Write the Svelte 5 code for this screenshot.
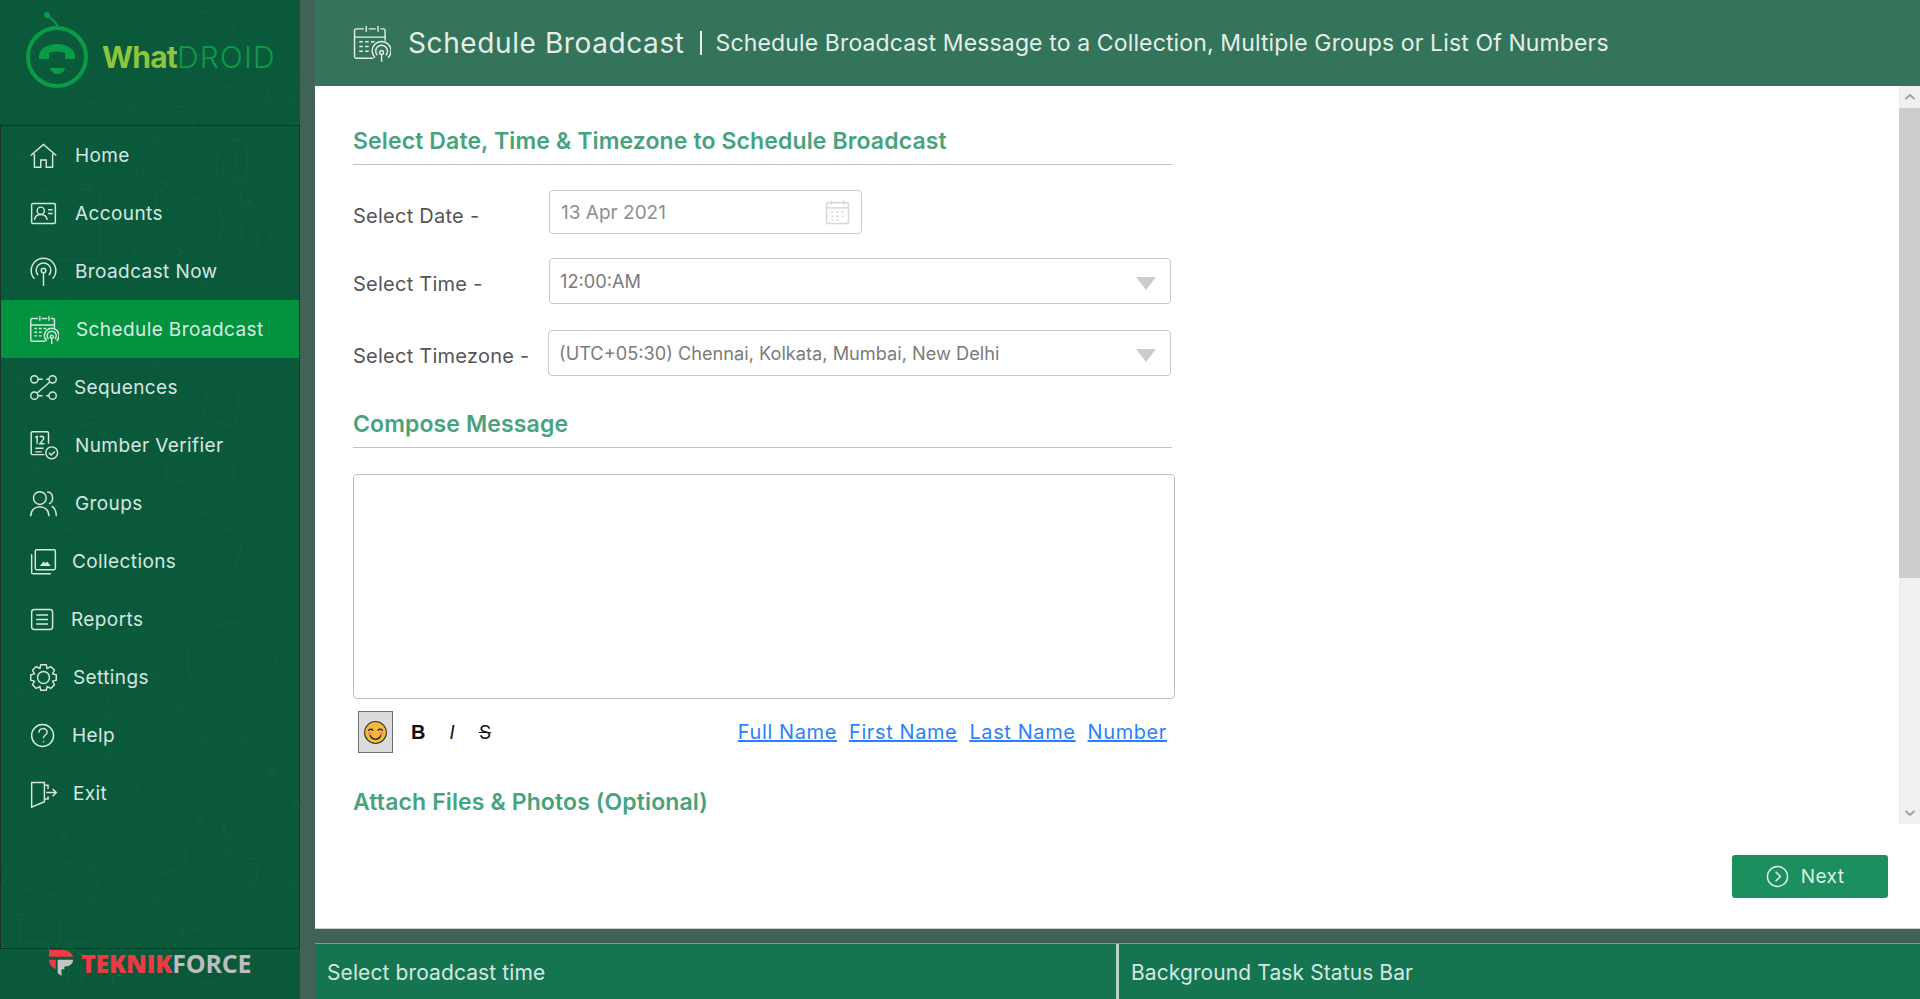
<script lang="ts">
	const navItems = [
		{ id: 'home', label: 'Home', gap: 16 },
		{ id: 'accounts', label: 'Accounts', gap: 16 },
		{ id: 'broadcast', label: 'Broadcast Now', gap: 16 },
		{ id: 'schedule', label: 'Schedule Broadcast', gap: 17, active: true },
		{ id: 'sequences', label: 'Sequences', gap: 15 },
		{ id: 'verifier', label: 'Number Verifier', gap: 16 },
		{ id: 'groups', label: 'Groups', gap: 16 },
		{ id: 'collections', label: 'Collections', gap: 13 },
		{ id: 'reports', label: 'Reports', gap: 12 },
		{ id: 'settings', label: 'Settings', gap: 14 },
		{ id: 'help', label: 'Help', gap: 13 },
		{ id: 'exit', label: 'Exit', gap: 14 }
	];

	const tokens = ['Full Name', 'First Name', 'Last Name', 'Number'];
	const timezone = '(UTC+05:30) Chennai, Kolkata, Mumbai, New Delhi';

	// small bubbles scattered through the wallpaper
	const bubbles = Array.from({ length: 70 }, (_, i) => ({
		x: (i * 137) % 297,
		y: (i * 211 + 40) % 990,
		r: 3 + (i * 7) % 7
	}));
</script>

{#snippet scheduleIcon()}
	<path d="M11 5H4.500a1.500 1.500 0 0 0-1.500 1.500v22a1.500 1.500 0 0 0 1.500 1.500H19M15 5h6M25 5h2.500A1.500 1.500 0 0 1 29 6.500V15M3 12h26M13 2.500v5M23 2.500v5" />
	<path d="M7 16h3M12 16h3M17 16h3M7 20h3M12 20h3M7 24h3M12 24h3" />
	<circle cx="26" cy="25" r="1.600" />
	<path d="M26 26.500V33M22.500 27.500a5 5 0 1 1 7 0M20.500 29.500a8 8 0 1 1 11 0" />
{/snippet}

<div class="app">
	<aside class="sidebar">
		<svg class="doodles" viewBox="0 0 300 999" aria-hidden="true">
			{#each bubbles as b}
				<circle cx={b.x} cy={b.y} r={b.r} />
			{/each}
			<path d="M180 20c20-14 48-10 54 8s-20 30-40 26-28-22-14-34zM280 60l8 14 16 2-12 10 3 16-15-8-14 8 3-16-12-10 16-2z" />
			<path d="M240 140c-20 0-30 20-20 38M170 110c8-6 20-4 24 4s-2 18-8 20" />
			<path d="M235 145c0-8 12-8 12 0v30c0 8-12 8-12 0zM222 165c2 24 36 24 38 0M241 190v15" />
			<path d="M140 165l10 16 18 2-13 13 4 18-17-9-16 9 3-18-13-13 18-2z" />
			<path d="M40 190h60v70H40zM190 200c20-4 36 8 32 30s-26 30-44 20" />
			<path d="M250 200l20 24h-12v22h-16v-22h-12z" />
			<path d="M210 380l30 6-4 40-34-6zM20 420l10 16 18 2-13 13 4 18-17-9" />
			<circle cx="200" cy="470" r="34" /><path d="M186 470c6-6 10-6 14 0M210 470c4 4 8 4 12 0" />
			<path d="M222 530c16-4 24 10 14 36l-18 30-12-6" />
			<path d="M60 430l40-8 6 34-40 8zM100 560c20-8 40-4 50 12M40 600c-18 4-26 26-12 40" />
			<path d="M90 660l10 20 22 2-15 14 5 22-22-11M190 640l30-16c30-8 70 20 50 50l-50 40c-20-10-40-40-30-74z" />
			<path d="M210 800l70-30 24 46-70 30zM222 806l32 14 22-30" />
			<path d="M10 850l90 20-6 34-90-20zM150 840c14-10 34-4 36 12s-18 24-30 20" />
			<path d="M20 915h28v28h-28zM60 915h28v28H60zM42 950h26v34" />
			<path d="M225 820c-6 30 14 42 34 38l-4 30M180 930c16-6 34 2 36 20M240 940c-4 14 0 30 10 40" />
			<path d="M80 970l30-8 4 24-30 8zM185 972l12 12 18-2-8 16" />
		</svg>

		<div class="logo">
			<svg class="logo-mark" viewBox="0 0 70 90" aria-hidden="true">
				<path class="antenna" d="M25 15c4 3 7 5 9 10" />
				<circle class="antenna-tip" cx="23" cy="13" r="3" />
				<circle class="ring" cx="33" cy="55" r="29" />
				<path class="receiver" d="M15 54c0-7 8-12 18-12s18 5 18 12v3h-10v-6c-5-2-11-2-16 0v6H15z" />
				<path class="receiver" d="M26 66h15c-1 4-4 6-7.500 6s-6.500-2-7.500-6z" />
			</svg>
			<span class="wordmark"><b>What</b><span>DROID</span></span>
		</div>

		<nav class="nav">
			{#each navItems as item}
				<a class="nav-item" class:active={item.active} href="#{item.id}">
					<svg class="nav-icon" viewBox="0 0 34 34" aria-hidden="true">
						{#if item.id === 'home'}
							<path d="M3 17 17 5l14 12M7 15v15h7v-8h6v8h7V15" />
						{:else if item.id === 'accounts'}
							<rect x="4" y="6" width="26" height="22" rx="1.500" />
							<circle cx="14" cy="14" r="4" />
							<path d="M7 24c1-8 13-8 14 0M22 13h5M22 17h5" />
						{:else if item.id === 'broadcast'}
							<circle cx="17" cy="16" r="2.500" />
							<path d="M17 18.500V33M11 21a8 8 0 1 1 12 0M7 25a13.500 13.500 0 1 1 20 0" />
						{:else if item.id === 'schedule'}
							{@render scheduleIcon()}
						{:else if item.id === 'sequences'}
							<circle cx="7" cy="8" r="4" /><circle cx="27" cy="8" r="4" />
							<circle cx="7" cy="26" r="4" /><circle cx="27" cy="26" r="4" />
							<path d="M11 8h5M20 8h3M24 11 10 23M11 26h5M20 26h3" />
						{:else if item.id === 'verifier'}
							<path d="M18 27H5a1.500 1.500 0 0 1-1.500-1.500v-22A1.500 1.500 0 0 1 5 2h16a1.500 1.500 0 0 1 1.500 1.500V15" />
							<path d="M8 8l2-1v8M13 8c1-2 5-1 4 2l-4 5h5M8 20h9M8 24h7" />
							<circle cx="26" cy="25" r="6.500" />
							<path d="m23 25 2.500 2.500 4-4" />
						{:else if item.id === 'groups'}
							<circle cx="13" cy="11" r="7" />
							<path d="M3 31c0-14 20-14 20 0M21 4.500c7 0 8 10 2 13M26 20c4 2 5 6 5 11" />
						{:else if item.id === 'collections'}
							<rect x="8" y="4" width="22" height="22" rx="1.500" />
							<path d="M4 9v20a1.500 1.500 0 0 0 1.500 1.500H25" />
							<path class="solid" d="m13 22 4-5 2 2 2-2 4 5z" />
						{:else if item.id === 'reports'}
							<rect x="4" y="6" width="23" height="22" rx="3" />
							<path d="M9 12h13M9 17h13M9 22h13" />
						{:else if item.id === 'settings'}
							<circle cx="17" cy="17" r="6.500" />
							<path d="M14 3h6l1 4 4-2 4 4-2 4 4 1v6l-4 1 2 4-4 4-4-2-1 4h-6l-1-4-4 2-4-4 2-4-4-1v-6l4-1-2-4 4-4 4 2z" />
						{:else if item.id === 'help'}
							<circle cx="16" cy="17" r="12" />
							<path d="M12 14c0-6 9-6 9-.5 0 3-4 3-4 6.500M17 23v1.500" />
						{:else if item.id === 'exit'}
							<path d="M4 5h14v21l-14 6zM4 5l14 0" />
							<path d="M18 8h4v4M22 20v3h-4M20 16h11M27 12l4 4-4 4" />
						{/if}
					</svg>
					<span style="margin-left: {item.gap}px">{item.label}</span>
				</a>
			{/each}
		</nav>

		<div class="vendor">
			<svg class="vendor-mark" viewBox="0 0 26 28" aria-hidden="true">
				<path class="red" d="M0 0h14c6 0 10 3 11 7H0zM0 10h7v10C3 18 0 14 0 10z" />
				<path class="grey" d="M9 10h16c0 4-3 7-8 7h-1v3h-3v7l-4-3z" />
			</svg>
			<span class="vendor-name"><b>TEKNIK</b><span>FORCE</span></span>
		</div>
	</aside>

	<div class="gutter"></div>

	<div class="workspace">
		<header class="page-head">
			<svg class="head-icon" viewBox="0 0 34 34" aria-hidden="true">
				{@render scheduleIcon()}
			</svg>
			<h1>Schedule Broadcast</h1>
			<span class="head-sep"></span>
			<p>Schedule Broadcast Message to a Collection, Multiple Groups or List Of Numbers</p>
		</header>

		<main class="panel">
			<div class="scroller">
				<form class="form">
					<h2 class="ruled">Select Date, Time &amp; Timezone to Schedule Broadcast</h2>

					<div class="field date-field">
						<label for="date">Select Date -</label>
						<div class="control date-control">
							<input id="date" value="13 Apr 2021" readonly />
							<svg class="cal" viewBox="0 0 24 24" aria-hidden="true">
								<rect x="1.500" y="3" width="21" height="20" rx="2" />
								<path d="M1.500 8h21" />
								<path class="dots" d="M6 5V1M18 5V1M6 12h2M11 12h2M16 12h2M6 16h2M11 16h2M16 16h2M6 20h2M11 20h2" />
							</svg>
						</div>
					</div>

					<div class="field time-field">
						<label for="time">Select Time -</label>
						<div class="control">
							<select id="time"><option>12:00:AM</option></select>
							<span class="caret"></span>
						</div>
					</div>

					<div class="field zone-field">
						<label for="zone">Select Timezone -</label>
						<div class="control">
							<select id="zone"><option>{timezone}</option></select>
							<span class="caret"></span>
						</div>
					</div>

					<h2 class="ruled compose">Compose Message</h2>
					<textarea aria-label="Message"></textarea>

					<div class="toolbar">
						<button type="button" class="emoji" aria-label="Emoji">
							<svg viewBox="0 0 24 24" aria-hidden="true">
								<circle cx="12" cy="12" r="10.500" fill="#f7b93a" stroke="#333" stroke-width="1" />
								<circle cx="6.500" cy="13" r="2" fill="#ef8d5a" />
								<circle cx="17.500" cy="13" r="2" fill="#ef8d5a" />
								<path d="M5.500 10c1-1.500 3-1.500 4 0M14.500 10c1-1.500 3-1.500 4 0M7 15c2 4.500 8 4.500 10 0" fill="none" stroke="#222" stroke-width="1.200" stroke-linecap="round" />
							</svg>
						</button>
						<button type="button" class="fmt bold">B</button>
						<button type="button" class="fmt italic">I</button>
						<button type="button" class="fmt strike">S</button>
						<div class="tokens">
							{#each tokens as token}
								<a href="#{token}">{token}</a>
							{/each}
						</div>
					</div>

					<h2 class="attach">Attach Files &amp; Photos (Optional)</h2>
				</form>

				<div class="scrollbar" aria-hidden="true">
					<svg viewBox="0 0 12 8"><path d="M1.500 6 6 2l4.500 4" /></svg>
					<div class="track"><div class="thumb"></div></div>
					<svg viewBox="0 0 12 8"><path d="M1.500 2 6 6l4.500-4" /></svg>
				</div>
			</div>

			<div class="actions">
				<button type="button" class="next">
					<svg viewBox="0 0 24 24" aria-hidden="true">
						<circle cx="12" cy="12" r="10.500" />
						<path d="m10 7 5 5-5 5" />
					</svg>
					Next
				</button>
			</div>
		</main>

		<footer class="statusbar">
			<div class="status-left">Select broadcast time</div>
			<div class="status-right">Background Task Status Bar</div>
		</footer>
	</div>
</div>

<style>
	:global(body) {
		margin: 0;
		background: #416357;
	}

	.app {
		display: grid;
		grid-template-columns: 300px 15px 1fr;
		height: 999px;
		overflow: hidden;
		font-family: 'Inter', 'Open Sans', sans-serif;
	}

	.gutter {
		background: #416357;
	}

	/* sidebar */
	.sidebar {
		position: relative;
		display: flex;
		flex-direction: column;
		background: #0a593b;
		color: #d5e7e1;
		overflow: hidden;
	}

	.doodles {
		position: absolute;
		inset: 0;
		width: 300px;
		height: 999px;
		fill: none;
		stroke: rgba(255, 255, 255, 0.028);
		stroke-width: 1.500;
	}

	.logo {
		position: relative;
		display: flex;
		align-items: center;
		height: 126px;
		box-sizing: border-box;
		padding: 0 0 13px 24px;
	}

	.logo-mark {
		width: 70px;
		height: 90px;
		margin-bottom: 20px;
		fill: none;
	}

	.ring {
		stroke: #0a9a48;
		stroke-width: 4;
	}

	.antenna {
		stroke: #0a9a48;
		stroke-width: 2;
	}

	.antenna-tip,
	.receiver {
		fill: #0a9a48;
	}

	.wordmark {
		margin: 0 0 0 8px;
		font-size: 30px;
		letter-spacing: -0.8px;
		color: #0a9a48;
		font-weight: 300;
	}

	.wordmark span {
		letter-spacing: 1.2px;
	}

	.wordmark b {
		color: #8fc53c;
		font-weight: 700;
	}

	.nav {
		position: relative;
		flex: 1;
		display: flex;
		flex-direction: column;
		border: 1px dotted #06231a;
		margin-top: -1px;
	}

	.nav-item {
		display: flex;
		align-items: center;
		flex: none;
		height: 58px;
		padding-left: 27px;
		color: inherit;
		font-size: 19px;
		letter-spacing: 0.4px;
		text-decoration: none;
	}

	.nav-item.active {
		background: #039340;
		color: #d5eee0;
	}

	.nav-icon {
		flex: none;
		width: 31px;
		height: 31px;
		fill: none;
		stroke: #d5e7e1;
		stroke-width: 1.600;
	}

	.solid {
		fill: #d5e7e1;
		stroke: none;
	}

	.vendor {
		position: relative;
		display: flex;
		align-items: center;
		height: 50px;
		padding: 0 0 22px 49px;
		box-sizing: border-box;
	}

	.vendor-mark {
		width: 25px;
		height: 27px;
	}

	.red {
		fill: #ef3b45;
	}

	.grey {
		fill: #c4c4c4;
	}

	.vendor-name {
		margin-left: 7px;
		font-family: 'Open Sans', sans-serif;
		font-size: 25px;
		font-weight: 700;
		letter-spacing: -0.2px;
		color: #bdbdbd;
	}

	.vendor-name b {
		color: #ee3a44;
	}

	/* right side */
	.workspace {
		display: flex;
		flex-direction: column;
		min-width: 0;
	}

	.page-head {
		flex: none;
		display: flex;
		align-items: center;
		height: 86px;
		box-sizing: border-box;
		padding-left: 36px;
		background: #33745a;
		color: #e4efe9;
	}

	.head-icon {
		width: 40px;
		height: 40px;
		fill: none;
		stroke: #e4efe9;
		stroke-width: 1.200;
	}

	h1 {
		margin: 0 0 0 17px;
		font-size: 28px;
		font-weight: 400;
		letter-spacing: 0.6px;
	}

	.head-sep {
		width: 2px;
		height: 24px;
		margin: 0 14px 0 15px;
		background: #e4efe9;
	}

	.page-head p {
		margin: 0;
		font-size: 23px;
		letter-spacing: 0.13px;
	}

	.panel {
		flex: 1;
		display: flex;
		flex-direction: column;
		min-height: 0;
		background: #fff;
		border-bottom: 1px solid #c9cfcc;
	}

	.scroller {
		display: flex;
		justify-content: space-between;
		height: 738px;
		overflow: hidden;
	}

	.form {
		width: 822px;
		padding: 40px 0 0 38px;
	}

	h2 {
		margin: 0;
		height: 30px;
		line-height: 30px;
		font-size: 23px;
		font-weight: 600;
		letter-spacing: 0.12px;
		color: #47a27e;
	}

	.ruled {
		box-sizing: content-box;
		width: 819px;
		padding-bottom: 8px;
		border-bottom: 1px solid #c4c4c4;
	}

	.field {
		display: flex;
		align-items: center;
		width: 818px;
	}

	.date-field {
		margin-top: 25px;
	}

	.time-field {
		margin-top: 24px;
	}

	.zone-field {
		margin-top: 26px;
	}

	label {
		flex: none;
		width: 196px;
		margin-top: 5px;
		font-size: 20px;
		letter-spacing: 0.25px;
		color: #555;
	}

	.date-field label {
		margin-top: 8px;
	}

	.zone-field label {
		width: 195px;
	}

	.control {
		position: relative;
		flex: 1;
	}

	.date-control {
		flex: none;
		width: 313px;
	}

	input,
	select {
		display: block;
		width: 100%;
		box-sizing: border-box;
		height: 46px;
		padding: 0 10px;
		border: 1px solid #c9c9c9;
		border-radius: 4px;
		background: #fff;
		color: #7b7b7b;
		font-family: inherit;
		font-size: 18.200px;
		appearance: none;
		outline: none;
	}

	input {
		height: 44px;
		padding: 0 11px;
		color: #8e8e8e;
		font-size: 19px;
	}

	.cal {
		position: absolute;
		right: 12px;
		top: 9px;
		width: 25px;
		height: 26px;
		fill: none;
		stroke: #d8d8d8;
		stroke-width: 1.500;
	}

	.caret {
		position: absolute;
		right: 15px;
		top: 19px;
		border-left: 10px solid transparent;
		border-right: 10px solid transparent;
		border-top: 13px solid #cbcbcb;
	}

	.compose {
		margin-top: 33px;
	}

	textarea {
		display: block;
		box-sizing: border-box;
		width: 822px;
		height: 225px;
		margin-top: 26px;
		border: 1px solid #bdbdbd;
		border-radius: 4px;
		resize: none;
		outline: none;
	}

	.toolbar {
		display: flex;
		align-items: center;
		width: 822px;
		height: 42px;
		margin-top: 12px;
		padding-right: 8px;
		padding-left: 5px;
		box-sizing: border-box;
	}

	button {
		font-family: inherit;
	}

	.emoji {
		width: 35px;
		height: 42px;
		padding: 0;
		display: flex;
		align-items: center;
		justify-content: center;
		border: 1px solid #707070;
		background: #dcdcdc;
	}

	.emoji svg {
		width: 25px;
		height: 25px;
	}

	.fmt {
		width: 14px;
		padding: 0;
		border: 0;
		background: none;
		color: #111;
		font-size: 19px;
		text-align: center;
	}

	.bold {
		margin-left: 18px;
		font-size: 20px;
		font-weight: 700;
		font-family: 'Liberation Sans', sans-serif;
	}

	.italic {
		margin-left: 20px;
		font-style: italic;
	}

	.strike {
		margin-left: 19px;
		text-decoration: line-through;
	}

	.tokens {
		display: flex;
		gap: 12px;
		margin-left: auto;
	}

	.tokens a {
		color: #2a7fff;
		font-size: 20px;
		letter-spacing: 0.6px;
	}

	.attach {
		margin-top: 34px;
		white-space: nowrap;
	}

	.scrollbar {
		flex: none;
		display: flex;
		flex-direction: column;
		width: 21px;
		background: #f0f0f0;
	}

	.scrollbar svg {
		flex: none;
		width: 12px;
		height: 8px;
		margin: 7px auto;
		fill: none;
		stroke: #a3a3a3;
		stroke-width: 2;
	}

	.track {
		flex: 1;
	}

	.thumb {
		height: 470px;
		background: #cdcdcd;
	}

	.actions {
		flex: 1;
		display: flex;
		justify-content: flex-end;
		align-items: flex-start;
		padding: 31px 32px 0 0;
	}

	.next {
		display: flex;
		align-items: center;
		justify-content: center;
		gap: 12px;
		width: 156px;
		height: 43px;
		padding: 0 10px 0 0;
		border: 0;
		border-radius: 3px;
		background: #1c8f5f;
		color: #dff0e8;
		font-size: 19px;
		letter-spacing: 0.4px;
	}

	.next svg {
		width: 23px;
		height: 23px;
		fill: none;
		stroke: #dff0e8;
		stroke-width: 1.500;
	}

	.statusbar {
		flex: none;
		display: flex;
		height: 56px;
		margin-top: 14px;
		border-top: 1px solid #7f9b8f;
		box-sizing: border-box;
		background: #b9d3c8;
		font-size: 21px;
		letter-spacing: 0.1px;
		color: #d5e7e1;
	}

	.status-left,
	.status-right {
		display: flex;
		align-items: center;
		padding-top: 2px;
		background: #167551;
	}

	.status-left {
		width: 801px;
		box-sizing: border-box;
		padding-left: 12px;
	}

	.status-right {
		flex: 1;
		margin-left: 3px;
		padding-left: 12px;
	}
</style>
